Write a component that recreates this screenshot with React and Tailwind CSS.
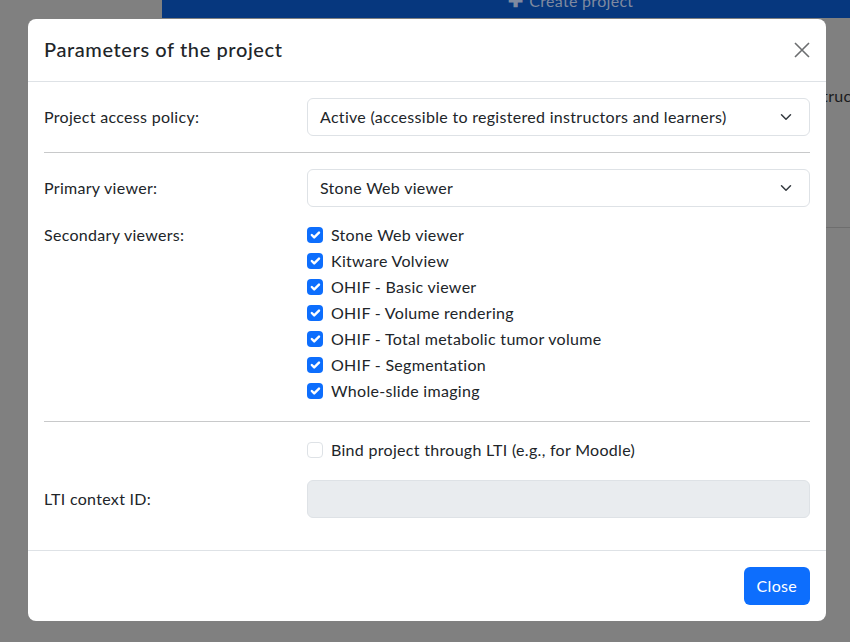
import React from "react";

const viewers = [
  "Stone Web viewer",
  "Kitware Volview",
  "OHIF - Basic viewer",
  "OHIF - Volume rendering",
  "OHIF - Total metabolic tumor volume",
  "OHIF - Segmentation",
  "Whole-slide imaging",
];

function Chevron() {
  return (
    <svg width="16" height="12" viewBox="0 0 16 16" className="absolute right-[15px] top-1/2 -translate-y-1/2">
      <path fill="none" stroke="#343a40" strokeLinecap="round" strokeLinejoin="round" strokeWidth="2" d="m2 5 6 6 6-6" />
    </svg>
  );
}

function Select({ value }) {
  return (
    <div className="relative h-[38px] w-full rounded-[6px] border border-[#dee2e6] bg-white pl-[12px] flex items-center text-[16px] text-[#212529]">
      {value}
      <Chevron />
    </div>
  );
}

function Check({ checked }) {
  return checked ? (
    <span className="flex h-[16px] w-[16px] shrink-0 items-center justify-center rounded-[4px] bg-[#0d6efd]">
      <svg width="16" height="16" viewBox="0 0 20 20">
        <path fill="none" stroke="#fff" strokeLinecap="round" strokeLinejoin="round" strokeWidth="3" d="m6 10 3 3 6-6" />
      </svg>
    </span>
  ) : (
    <span className="h-[16px] w-[16px] shrink-0 rounded-[4px] border border-[#dee2e6] bg-white" />
  );
}

export default function App() {
  return (
    <div className="relative h-[642px] w-[850px] overflow-hidden bg-[#808080] font-['Lato',sans-serif] tracking-[0.3px] text-[#212529]">
      {/* background page (dimmed) */}
      <div className="absolute left-[162px] top-0 h-[18px] w-[700px] bg-[#06377e]">
        <div className="absolute left-[346px] top-[-13px] flex items-center gap-[6px] text-[16px] text-[#7f8aa0]">
          <span className="text-[18px] font-bold">✚</span>
          <span>Create project</span>
        </div>
      </div>
      <div className="absolute left-[801px] top-[84px] text-[16px] text-[#1a1b1d]">Instructors</div>
      <div className="absolute left-[826px] top-[227px] h-px w-[30px] bg-[#6e6e6e]" />

      {/* modal */}
      <div className="absolute left-[28px] top-[19px] w-[798px] rounded-[8px] bg-white">
        <div className="flex h-[63px] items-center justify-between border-b border-[#dee2e6] px-[16px]">
          <h5 className="-mt-[3px] text-[20px] font-medium leading-[30px] tracking-[0.6px]">Parameters of the project</h5>
          <svg width="16" height="16" viewBox="0 0 16 16" className="-mt-[1px]">
            <path stroke="#6c6e70" strokeWidth="1.6" d="M1 1l14 14M15 1L1 15" />
          </svg>
        </div>

        <div className="p-[16px] text-[16px]">
          <div className="grid grid-cols-[251px_1fr] gap-x-[12px] items-center">
            <div>Project access policy:</div>
            <Select value="Active (accessible to registered instructors and learners)" />
          </div>

          <hr className="my-[16px] border-0 border-t border-[#c8c9ca]" />

          <div className="grid grid-cols-[251px_1fr] gap-x-[12px] items-center">
            <div>Primary viewer:</div>
            <Select value="Stone Web viewer" />
          </div>

          <div className="mt-[16px] grid grid-cols-[251px_1fr] gap-x-[12px]">
            <div className="leading-[24px]">Secondary viewers:</div>
            <div className="flex flex-col gap-[2px] pb-[2px]">
              {viewers.map((v) => (
                <label key={v} className="flex h-[24px] items-center gap-[8px]">
                  <Check checked />
                  <span>{v}</span>
                </label>
              ))}
            </div>
          </div>

          <hr className="my-[16px] border-0 border-t border-[#c8c9ca]" />

          <div className="grid grid-cols-[251px_1fr] gap-x-[12px]">
            <div />
            <label className="flex h-[24px] items-center gap-[8px]">
              <Check checked={false} />
              <span>Bind project through LTI (e.g., for Moodle)</span>
            </label>
          </div>

          <div className="mt-[18px] mb-[16px] grid grid-cols-[251px_1fr] gap-x-[12px] items-center">
            <div>LTI context ID:</div>
            <div className="h-[38px] rounded-[6px] border border-[#dee2e6] bg-[#e9ecef]" />
          </div>
        </div>

        <div className="flex justify-end border-t border-[#dee2e6] px-[16px] py-[16px]">
          <button className="h-[38px] rounded-[6px] bg-[#0d6efd] px-[13px] text-[16px] text-white">Close</button>
        </div>
      </div>
    </div>
  );
}
